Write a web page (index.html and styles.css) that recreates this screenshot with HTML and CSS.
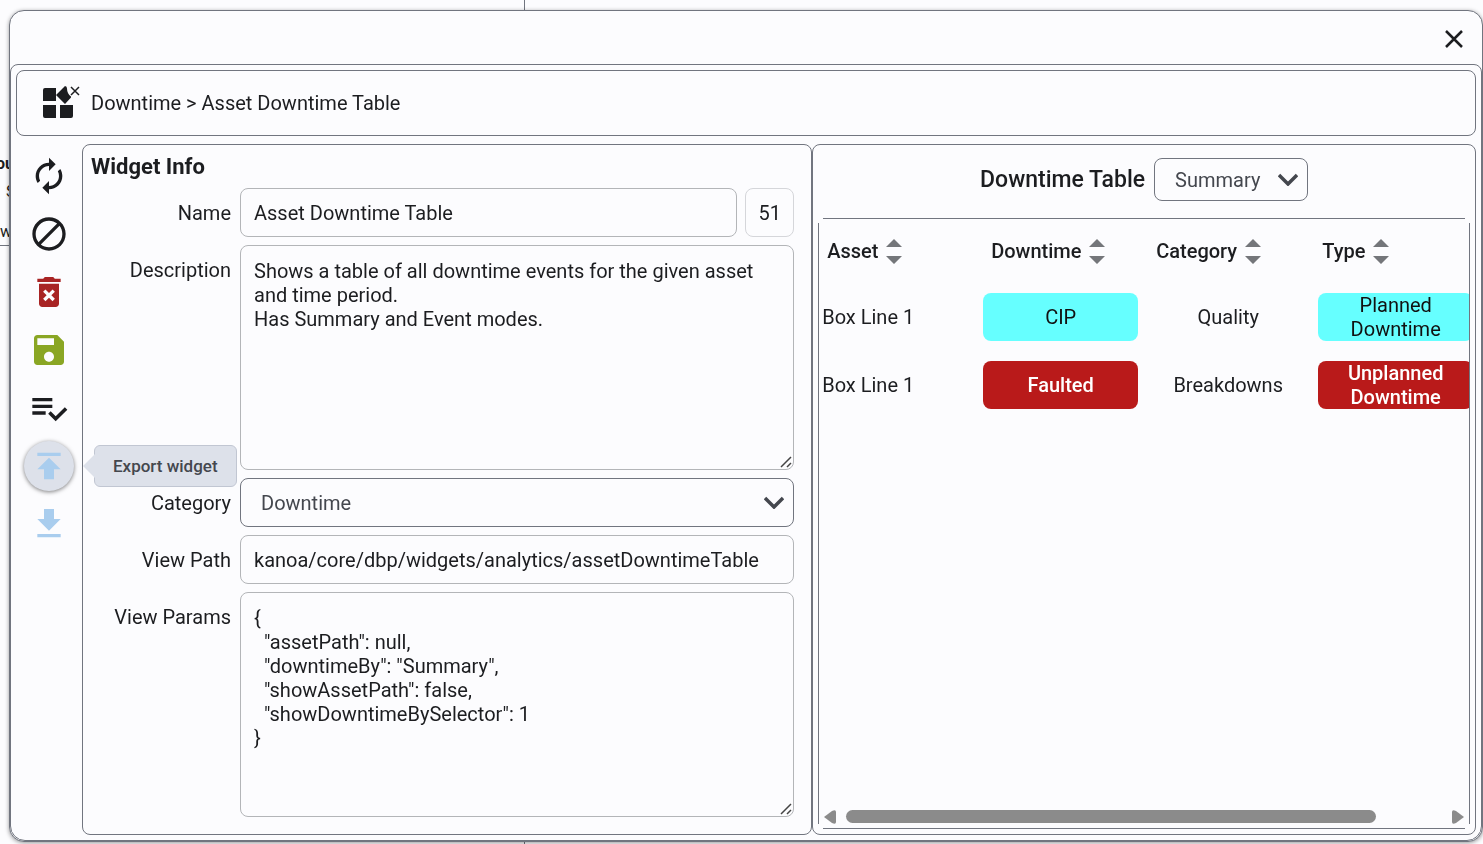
FILE: index.html
```
<!DOCTYPE html>
<html lang="en">
<head>
    <meta charset="utf-8">
    <title>Asset Downtime Table</title>
    <meta name="viewport" content="width=device-width, initial-scale=1">
    <link rel="stylesheet" href="styles.css">
</head>
<body>
    <div class="backdrop">
        <div class="backdrop-left">
            <b>ou</b>
            <span class="right">S</span>
            <span class="underlined">w</span>
        </div>
        <div class="backdrop-right"></div>
    </div>

    <div class="modal" role="dialog" aria-label="Widget editor">
        <div class="modal-header">
            <button class="close" aria-label="Close">
                <svg viewBox="0 0 20 20"><path d="M2 2l16 16M18 2L2 18"/></svg>
            </button>
        </div>
        <div class="modal-body">
            <header class="breadcrumb">
                <svg class="widgets-icon" viewBox="0 1 40 36">
                    <path d="M3 4h11v13H1V6q0-2 2-2zM1 21h13v13H3q-2 0-2-2zM18 21h13v11q0 2-2 2H18z"/>
                    <path d="M14 11l9-9q2 0 2 2.500q0 5 4 8v1L23 20z"/>
                    <path class="thin" d="M29 3l8 8M37 3l-8 8"/>
                </svg>
                <span>Downtime &gt; Asset Downtime Table</span>
            </header>

            <div class="content">
                <nav class="toolbar">
                    <button aria-label="Refresh">
                        <svg viewBox="0 0 24 24"><path d="M12 6v3l4-4-4-4v3c-4.420 0-8 3.580-8 8 0 1.570.460 3.030 1.240 4.260L6.700 14.800c-.450-.830-.700-1.790-.700-2.800 0-3.310 2.690-6 6-6zm6.760 1.740L17.300 9.200c.440.840.700 1.790.700 2.800 0 3.310-2.690 6-6 6v-3l-4 4 4 4v-3c4.420 0 8-3.580 8-8 0-1.570-.460-3.030-1.240-4.260z"/></svg>
                    </button>
                    <button aria-label="Cancel">
                        <svg viewBox="0 0 24 24"><path d="M12 2C6.480 2 2 6.480 2 12s4.480 10 10 10 10-4.480 10-10S17.520 2 12 2zM4 12c0-4.420 3.580-8 8-8 1.850 0 3.550.630 4.900 1.690L5.690 16.900C4.630 15.550 4 13.850 4 12zm8 8c-1.850 0-3.550-.630-4.900-1.690L18.310 7.100C19.370 8.450 20 10.150 20 12c0 4.420-3.580 8-8 8z"/></svg>
                    </button>
                    <button class="delete" aria-label="Delete">
                        <svg viewBox="0 0 24 24"><path d="M6 19c0 1.100.900 2 2 2h8c1.100 0 2-.900 2-2V7H6v12zm2.460-7.120l1.410-1.410L12 12.590l2.120-2.120 1.410 1.410L13.410 14l2.120 2.120-1.410 1.410L12 15.410l-2.120 2.120-1.410-1.410L10.590 14l-2.130-2.120zM15.500 4l-1-1h-5l-1 1H5v2h14V4h-3.500z"/></svg>
                    </button>
                    <button class="save" aria-label="Save">
                        <svg viewBox="0 0 24 24"><path d="M17 3H5c-1.110 0-2 .900-2 2v14c0 1.100.890 2 2 2h14c1.100 0 2-.900 2-2V7l-4-4zm-5 16c-1.660 0-3-1.340-3-3s1.340-3 3-3 3 1.340 3 3-1.340 3-3 3zm3-10H5V5h10v4z"/></svg>
                    </button>
                    <button aria-label="Validate">
                        <svg viewBox="0 0 24 24"><path d="M14 10H2v2h12v-2zm0-4H2v2h12V6zM2 16h8v-2H2v2zm19.500-4.500L23 13l-6.990 7-4.510-4.500L13 14l3.010 3 5.490-5.500z"/></svg>
                    </button>
                    <button class="transfer active" aria-describedby="export-tip" aria-label="Export">
                        <svg viewBox="0 0 24 24"><path d="M5 4v2h14V4H5zm0 10h4v6h6v-6h4l-7-7-7 7z"/></svg>
                        <span class="tooltip" role="tooltip" id="export-tip">Export widget</span>
                    </button>
                    <button class="transfer" aria-label="Import">
                        <svg viewBox="0 0 24 24"><path d="M19 9h-4V3H9v6H5l7 7 7-7zM5 18v2h14v-2H5z"/></svg>
                    </button>
                </nav>

                <section class="panel info">
                    <h2>Widget Info</h2>
                    <form class="fields">
                        <label for="name">Name</label>
                        <div class="name-row">
                            <input type="text" id="name" value="Asset Downtime Table">
                            <input type="text" class="widget-id" value="51" aria-label="Widget id" readonly>
                        </div>

                        <label for="description">Description</label>
                        <textarea id="description" spellcheck="false">Shows a table of all downtime events for the given asset and time period.
Has Summary and Event modes.</textarea>

                        <label for="category">Category</label>
                        <div class="select">
                            <select id="category"><option>Downtime</option></select>
                            <svg viewBox="0 0 20 13"><path d="M1 2l9 9 9-9"/></svg>
                        </div>

                        <label for="path">View Path</label>
                        <input type="text" id="path" value="kanoa/core/dbp/widgets/analytics/assetDowntimeTable">

                        <label for="params">View Params</label>
                        <textarea id="params" spellcheck="false">{
  "assetPath": null,
  "downtimeBy": "Summary",
  "showAssetPath": false,
  "showDowntimeBySelector": 1
}</textarea>
                    </form>
                </section>

                <section class="panel preview">
                    <div class="preview-header">
                        <label for="mode">Downtime Table</label>
                        <div class="select small">
                            <select id="mode"><option>Summary</option></select>
                            <svg viewBox="0 0 20 13"><path d="M1 2l9 9 9-9"/></svg>
                        </div>
                    </div>
                    <div class="table-frame">
                        <div class="table-scroll">
                            <table>
                                <thead>
                                    <tr>
                                        <th class="asset"><button>Asset <svg viewBox="0 0 16 25"><path d="M0 8l8-8 8 8zM0 17h16l-8 8z"/></svg></button></th>
                                        <th class="downtime"><button>Downtime <svg viewBox="0 0 16 25"><path d="M0 8l8-8 8 8zM0 17h16l-8 8z"/></svg></button></th>
                                        <th class="category"><button>Category <svg viewBox="0 0 16 25"><path d="M0 8l8-8 8 8zM0 17h16l-8 8z"/></svg></button></th>
                                        <th class="type"><button>Type <svg viewBox="0 0 16 25"><path d="M0 8l8-8 8 8zM0 17h16l-8 8z"/></svg></button></th>
                                    </tr>
                                </thead>
                                <tbody>
                                    <tr>
                                        <td class="asset">Box Line 1</td>
                                        <td class="downtime"><span class="pill planned">CIP</span></td>
                                        <td class="category">Quality</td>
                                        <td class="type"><span class="pill planned">Planned Downtime</span></td>
                                    </tr>
                                    <tr>
                                        <td class="asset">Box Line 1</td>
                                        <td class="downtime"><span class="pill unplanned">Faulted</span></td>
                                        <td class="category">Breakdowns</td>
                                        <td class="type"><span class="pill unplanned">Unplanned Downtime</span></td>
                                    </tr>
                                </tbody>
                            </table>
                        </div>
                        <div class="scrollbar">
                            <button aria-label="Scroll left"><svg viewBox="0 0 12 14"><path d="M0 7l8-6q4-2 4 1v10q0 3-4 1z"/></svg></button>
                            <div class="track"><div class="thumb"></div></div>
                            <button aria-label="Scroll right"><svg viewBox="0 0 12 14"><path d="M12 7L4 1Q0-1 0 2v10q0 3 4 1z"/></svg></button>
                        </div>
                    </div>
                </section>
            </div>
        </div>
    </div>
</body>
</html>
```
FILE: styles.css
```
* {
    box-sizing: border-box;
}

body {
    margin: 0;
    background-color: #FCFCFE;
    font-family: Roboto, sans-serif;
    font-size: 20px;
    line-height: 24px;
    color: #1C1D20;
}

button, input, select, textarea {
    font: inherit;
    color: inherit;
}

button {
    background: none;
    border: none;
    padding: 0;
    cursor: pointer;
}

svg {
    display: block;
    fill: currentColor;
}

/* page behind the dialog */
.backdrop {
    display: flex;
    height: 100vh;
    overflow: hidden;
}

.backdrop-left {
    width: 525px;
    border-right: 1px solid #71757F;
    padding-top: 152px;
    font-size: 16px;
}

.backdrop-left b,
.backdrop-left span {
    display: block;
}

.backdrop-left b {
    margin-left: -4px;
    margin-bottom: 4px;
}

.backdrop-left .right {
    padding-left: 6px;
}

.backdrop-left .underlined {
    padding: 16px 0 1px;
    border-bottom: 1px solid #71757F;
}

.backdrop-right {
    flex: 1;
}

/* dialog */
.modal {
    position: fixed;
    inset: 10px 0 2px 9px;
    display: flex;
    flex-direction: column;
    background-color: #FCFCFE;
    border: 1px solid #71757F;
    border-radius: 15px;
    box-shadow: 0 1px 4px rgba(0, 0, 0, 0.4);
}

.modal-header {
    display: flex;
    justify-content: flex-end;
    align-items: center;
    height: 53px;
    padding: 3px 18px 0 0;
}

.close svg {
    width: 20px;
    height: 20px;
    fill: none;
    stroke: currentColor;
    stroke-width: 2.5;
}

.modal-body {
    flex: 1;
    min-height: 0;
    display: flex;
    flex-direction: column;
    gap: 8px;
    padding: 5px;
    border: 1px solid #71757F;
    border-radius: 8px 8px 15px 15px;
}

.breadcrumb {
    display: flex;
    align-items: center;
    gap: 9px;
    height: 66px;
    padding-left: 25px;
    border: 1px solid #71757F;
    border-radius: 8px;
}

.widgets-icon {
    width: 40px;
    height: 36px;
}

.thin {
    fill: none;
    stroke: currentColor;
    stroke-width: 1.5;
}

.content {
    flex: 1;
    min-height: 0;
    display: grid;
    grid-template-columns: 66px 11fr 10fr;
}

/* icon toolbar */
.toolbar {
    padding-top: 7px;
    display: flex;
    flex-direction: column;
    align-items: center;
    gap: 8px;
}

.toolbar button {
    position: relative;
    width: 50px;
    height: 50px;
    display: flex;
    align-items: center;
    justify-content: center;
    border-radius: 50%;
}

.toolbar svg {
    width: 40px;
    height: 40px;
}

.delete {
    color: #A82424;
}

.save {
    color: #8AA624;
}

.transfer {
    color: #A9CDEE;
}

.transfer.active {
    background-color: #DDE1EA;
    box-shadow: 0 1px 4px rgba(0, 0, 0, 0.5);
}

.tooltip {
    position: absolute;
    z-index: 1;
    left: 70px;
    top: 4px;
    padding: 8px 18px;
    background-color: #DDE1EA;
    border: 1px solid #C1C6D2;
    border-radius: 6px;
    color: #44474E;
    font-size: 17px;
    font-weight: 500;
    white-space: nowrap;
}

.tooltip::before {
    content: "";
    position: absolute;
    left: -12px;
    top: 8px;
    border: 12px solid transparent;
    border-left: none;
    border-right-color: #DDE1EA;
}

/* panels */
.panel {
    min-width: 0;
    border: 1px solid #71757F;
    border-radius: 8px;
}

.info {
    padding: 10px 17px 0 8px;
}

.info h2 {
    margin: 0 0 9px;
    font-size: 22px;
    line-height: 24px;
    font-weight: 700;
}

.fields {
    display: grid;
    grid-template-columns: 140px 1fr;
    column-gap: 9px;
    row-gap: 8px;
}

.fields > label {
    padding-top: 13px;
    text-align: right;
}

.name-row {
    display: flex;
    gap: 8px;
}

input[type=text], textarea {
    width: 100%;
    min-width: 0;
    height: 49px;
    margin: 0;
    padding: 0 13px;
    border: 1px solid #B3B5B8;
    border-radius: 8px;
    background: none;
}

input.widget-id {
    flex: none;
    width: 49px;
    padding: 0;
    text-align: center;
    border-color: #D5D6DA;
}

textarea {
    display: block;
    height: 225px;
    padding: 13px;
    resize: both;
}

textarea::-webkit-resizer {
    background: url("data:image/svg+xml,%3Csvg xmlns='http://www.w3.org/2000/svg' viewBox='0 0 15 15'%3E%3Cpath d='M3 13L13 3M9 13l4-4' stroke='%23444' stroke-width='1.5'/%3E%3C/svg%3E") no-repeat;
}

.select {
    position: relative;
}

.select select {
    appearance: none;
    display: block;
    width: 100%;
    height: 49px;
    padding: 0 40px 0 20px;
    border: 1px solid #71757F;
    border-radius: 8px;
    background: none;
    color: #44474E;
}

.select svg {
    position: absolute;
    right: 10px;
    top: 50%;
    width: 20px;
    height: 13px;
    margin-top: -7px;
    fill: none;
    stroke: #44474E;
    stroke-width: 3.5;
    pointer-events: none;
}

.select.small {
    width: 154px;
}

.select.small select {
    height: 43px;
}

/* preview */
.preview {
    display: flex;
    flex-direction: column;
    padding: 5px;
}

.preview-header {
    display: flex;
    align-items: center;
    justify-content: center;
    gap: 9px;
    padding: 8px 0 17px;
}

.preview-header label {
    font-size: 23px;
    font-weight: 500;
}

/* frame lines stop short of the corners */
.table-frame {
    flex: 1;
    min-height: 0;
    display: flex;
    flex-direction: column;
    padding: 1px;
    background:
        linear-gradient(#71757F, #71757F) top / calc(100% - 10px) 1px,
        linear-gradient(#71757F, #71757F) bottom / calc(100% - 10px) 1px,
        linear-gradient(#71757F, #71757F) left / 1px calc(100% - 10px),
        linear-gradient(#71757F, #71757F) right / 1px calc(100% - 10px);
    background-repeat: no-repeat;
}

.table-scroll {
    flex: 1;
    min-height: 0;
    overflow: hidden;
}

table {
    width: 750px;
    table-layout: fixed;
    border-collapse: collapse;
}

th, td {
    padding: 0;
}

thead tr {
    height: 64px;
}

tbody tr {
    height: 68px;
}

th {
    text-align: left;
    padding-left: 8px;
}

th button {
    display: flex;
    align-items: center;
    gap: 8px;
    font-weight: 500;
}

th svg {
    width: 16px;
    height: 25px;
    fill: #74767A;
}

th.asset {
    width: 164px;
}

th.downtime {
    width: 165px;
}

th.category {
    width: 166px;
}

td.asset {
    padding-left: 3px;
}

td.category {
    padding-right: 6px;
    text-align: center;
}

td.type {
    padding-left: 4px;
}

.pill {
    display: flex;
    align-items: center;
    justify-content: center;
    width: 155px;
    height: 48px;
    padding: 0 24px;
    border-radius: 8px;
    text-align: center;
}

.planned {
    background-color: #66FFFF;
    color: #111;
}

.unplanned {
    background-color: #B91A1A;
    color: #FFF;
    font-weight: 500;
}

.scrollbar {
    display: flex;
    align-items: center;
    gap: 10px;
    height: 23px;
    padding: 0 5px;
}

.scrollbar svg {
    width: 12px;
    height: 14px;
    fill: #8B8B8B;
}

.track {
    flex: 1;
}

.thumb {
    width: 89%;
    height: 13px;
    border-radius: 7px;
    background-color: #8B8B8B;
}
```
